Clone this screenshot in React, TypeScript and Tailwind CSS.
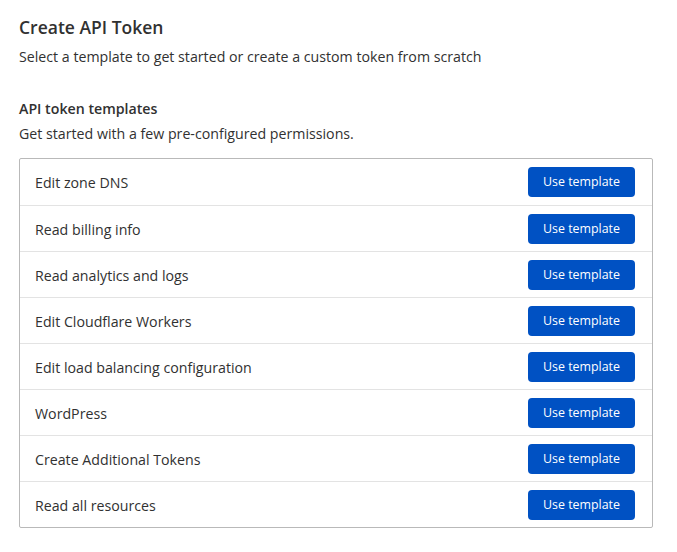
const templates = [
  'Edit zone DNS',
  'Read billing info',
  'Read analytics and logs',
  'Edit Cloudflare Workers',
  'Edit load balancing configuration',
  'WordPress',
  'Create Additional Tokens',
  'Read all resources',
]

export default function App() {
  return (
    <div className="min-h-screen bg-white px-[19px] pt-[14px] text-[#313131] font-['Open_Sans',sans-serif]">
      <h1 className="text-[17.5px] font-semibold leading-[26px]">Create API Token</h1>
      <p className="mt-[7px] text-[14.2px] leading-[20px]">
        Select a template to get started or create a custom token from scratch
      </p>

      <h2 className="mt-[32px] text-[14.2px] font-semibold leading-[20px]">API token templates</h2>
      <p className="mt-[5px] text-[14.2px] leading-[20px]">Get started with a few pre-configured permissions.</p>

      <div className="mt-[14px] w-[634px] border border-[#b9b9b9] rounded-[2px]">
        {templates.map((name, i) => (
          <div
            key={name}
            className={`flex h-[46px] items-center justify-between pl-[15px] pr-[17px] ${
              i > 0 ? 'border-t border-[#e3e3e3]' : ''
            }`}
          >
            <span className="pt-[2px] text-[14.2px]">{name}</span>
            <button className="h-[30px] w-[107px] rounded-[4px] bg-[#0051c3] pt-[1px] text-[12.4px] text-white">
              Use template
            </button>
          </div>
        ))}
      </div>
    </div>
  )
}
